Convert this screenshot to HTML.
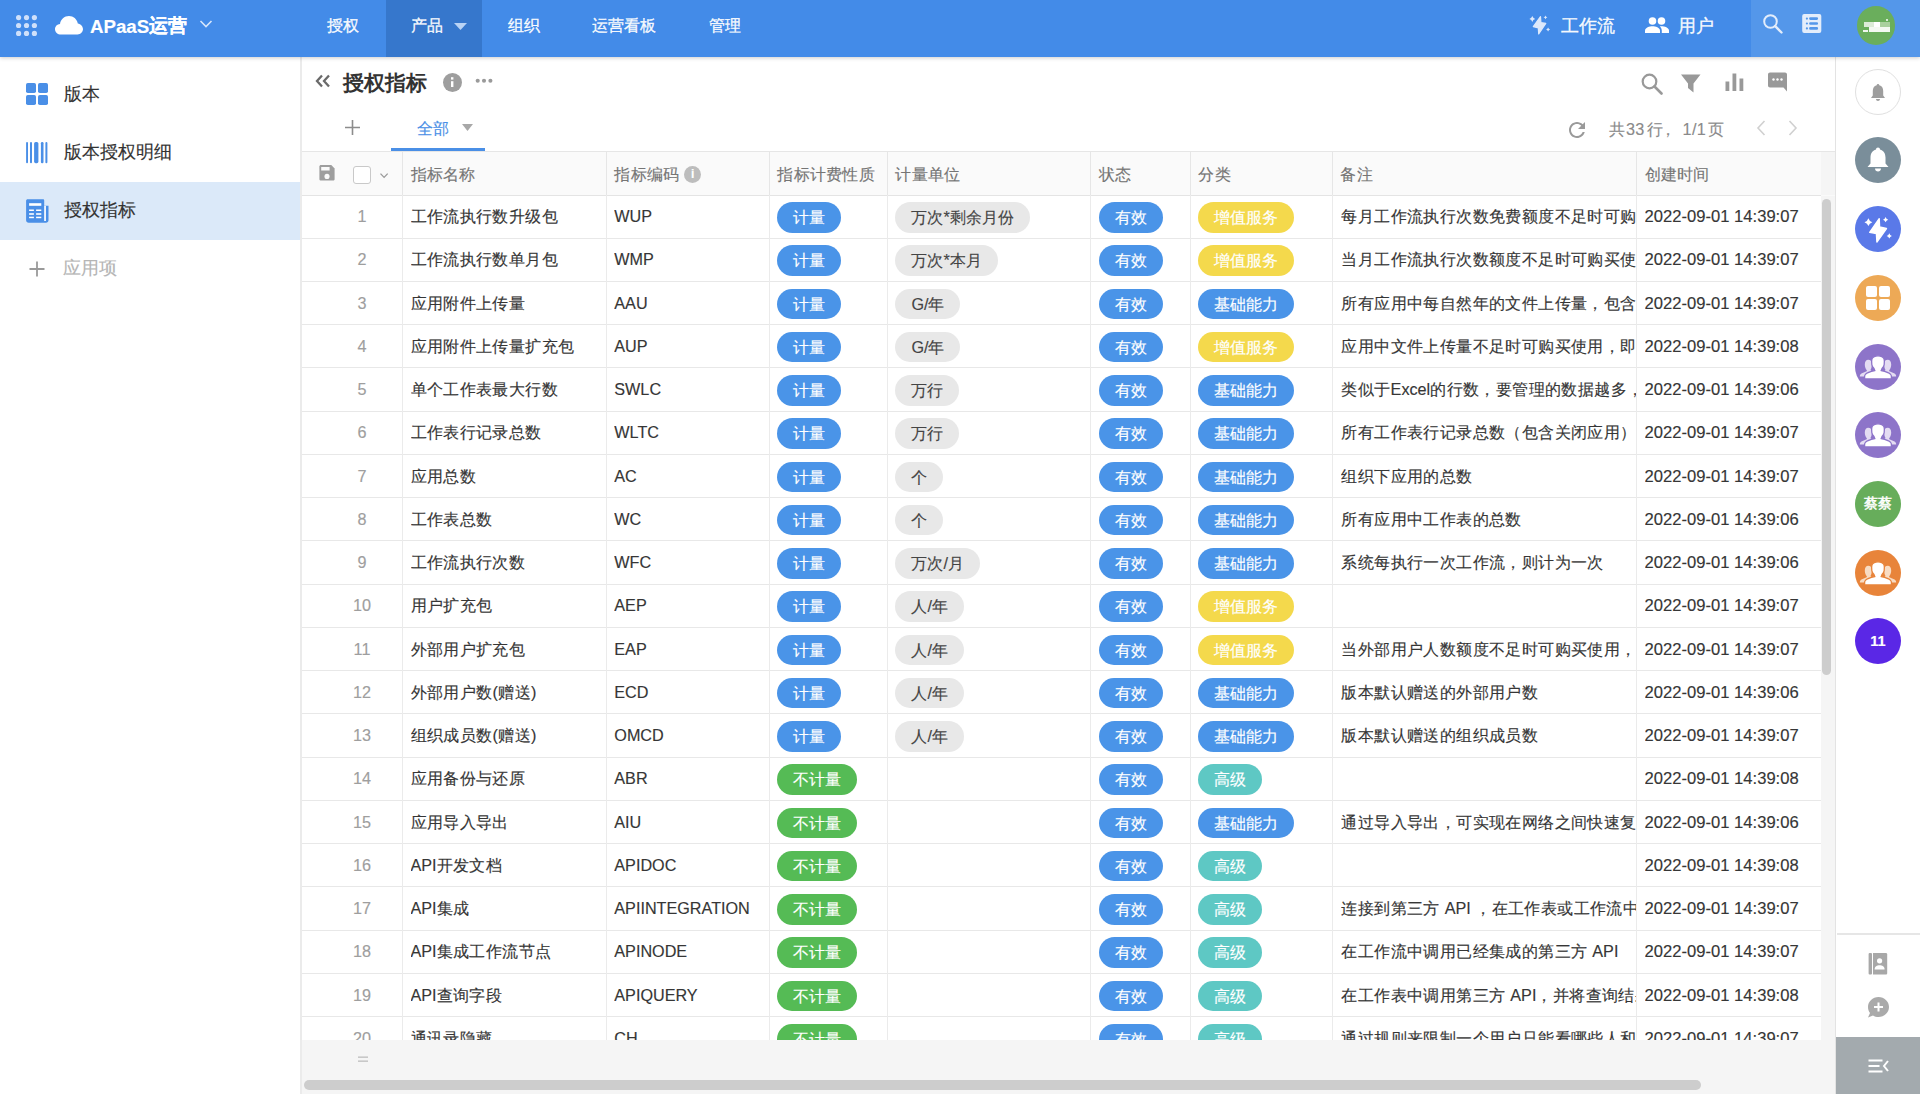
<!DOCTYPE html>
<html><head><meta charset="utf-8">
<style>
*{box-sizing:border-box;margin:0;padding:0}
html,body{width:1920px;height:1094px;overflow:hidden;background:#fff}
body{position:relative;font-family:"Liberation Sans",sans-serif;color:#333;font-size:16.2px;-webkit-text-stroke:0.15px currentColor}
.abs{position:absolute}
svg{position:absolute;display:block}
/* top header */
#top{position:absolute;left:0;top:0;width:1920px;height:57px;background:#438be8;box-shadow:0 1px 4px rgba(0,0,0,.2);z-index:5}
#top .nav{position:absolute;top:0;height:57px;line-height:50px;color:rgba(255,255,255,.95);-webkit-text-stroke:0.35px rgba(255,255,255,.9);font-size:16.2px;white-space:nowrap}
#top .act{position:absolute;left:385.5px;top:0;width:96.5px;height:57px;background:#3677cc}
#top .rt{position:absolute;left:1751px;top:0;width:169px;height:57px;background:#5497ea}
.brand{position:absolute;left:90px;top:0;line-height:52px;height:57px;color:#fff;font-size:18.7px;font-weight:bold;white-space:nowrap}
/* sidebar */
#side{position:absolute;left:0;top:57px;width:302px;height:1037px;border-right:2px solid #ebebeb;background:#fff}
.si{position:absolute;left:64px;font-size:18px;color:#333;white-space:nowrap;line-height:20px}
/* main */
.ttl{position:absolute;left:342.5px;top:70px;font-size:20.8px;font-weight:bold;color:#333;-webkit-text-stroke:0;line-height:26px;white-space:nowrap}
.tab{position:absolute;left:416.5px;top:119px;font-size:16.2px;color:#4a8fe6;line-height:18px}
.uline{position:absolute;left:390.5px;top:148px;width:94.5px;height:3px;background:#4a8fe6}
.pg{position:absolute;left:1609px;top:120.3px;font-size:16.2px;color:#8a8a8a;line-height:18px;white-space:nowrap}
/* table */
#thead{position:absolute;left:302px;top:151px;width:1533.5px;height:44.5px;background:#fafafa;border-top:1.5px solid #e6e6e6}
#thead:after{content:'';position:absolute;left:1519px;top:0;width:15px;height:43px;background:#f5f5f5}
.hb{position:absolute;left:302px;top:194.7px;width:1518.8px;height:1px;background:#e4e4e4}
.hc{position:absolute;top:153px;height:43px;line-height:43px;font-size:16.2px;color:#757575;white-space:nowrap;letter-spacing:.25px}
.hvl{position:absolute;top:152px;height:43px;width:1px;background:#e6e6e6}
.hinfo{display:inline-block;width:17px;height:17px;border-radius:50%;background:#bdbdbd;color:#fff;font-size:12px;line-height:17px;text-align:center;font-weight:bold;margin-left:5px;vertical-align:2px}
#tbody{position:absolute;left:0;top:0;width:1821px;height:1040px;overflow:hidden}
.rn{position:absolute;left:332px;width:60px;height:43.2px;line-height:43px;text-align:center;color:#9e9e9e;font-size:16.2px}
.c{position:absolute;height:43.2px;line-height:43px;white-space:nowrap;overflow:hidden}
.t{font-size:16.2px;color:#363636;letter-spacing:.4px}
.l{font-size:16.2px;letter-spacing:0}
.code{font-size:16.2px;letter-spacing:0}
.dt{font-size:16.6px;letter-spacing:0}
.hl{position:absolute;left:302px;width:1518.8px;height:1px;background:#e8e8e8}
.vl{position:absolute;top:195px;height:845px;width:1px;background:#ebebeb}
.bd{display:inline-block;height:30.6px;line-height:30.6px;border-radius:15.5px;padding:0 16px;font-size:16.2px;color:#fff;vertical-align:middle;position:relative;top:-0.5px}
.blu{background:#4a94e8}
.gry{background:#e8e8e8;color:#444}
.yel{background:#f4d94c}
.grn{background:#55bb55}
.tea{background:#5ec8c4}
#foot{position:absolute;left:302px;top:1040px;width:1533.5px;height:54px;background:#f5f5f5}
/* right rail */
#rail{position:absolute;left:1835px;top:57px;width:85px;height:1037px;border-left:1.5px solid #e3e3e3;background:#fff}
.cir{position:absolute;left:1855px;width:46px;height:46px;border-radius:50%}
</style></head><body>

<div id="top">
  <div class="act"></div>
  <div class="rt"></div>
  <!-- grid dots -->
  <svg style="left:14px;top:13px" width="26" height="26" viewBox="0 0 26 26" fill="#cfe0fa">
    <circle cx="4.6" cy="4.6" r="2.6"/><circle cx="12.5" cy="4.6" r="2.6"/><circle cx="20.4" cy="4.6" r="2.6"/>
    <circle cx="4.6" cy="12.5" r="2.6"/><circle cx="12.5" cy="12.5" r="2.6"/><circle cx="20.4" cy="12.5" r="2.6"/>
    <circle cx="4.6" cy="20.4" r="2.6"/><circle cx="12.5" cy="20.4" r="2.6"/><circle cx="20.4" cy="20.4" r="2.6"/>
  </svg>
  <!-- cloud -->
  <svg style="left:55px;top:16px" width="28" height="19" viewBox="0 0 28 19" fill="#fff">
    <path d="M6 18.5 C2.6 18.5 0 16.2 0 13.2 C0 10.4 2.2 8.2 5 8 C5.6 3.4 9.4 0 14 0 C18.4 0 22 3.2 22.8 7.4 C25.8 7.8 28 10.2 28 13.1 C28 16.1 25.6 18.5 22.5 18.5 Z"/>
  </svg>
  <div class="brand"><span style="position:relative;top:1px">APaaS</span>运营</div>
  <svg style="left:199px;top:19px" width="14" height="10" viewBox="0 0 14 10"><path d="M1.5 2 L7 7.5 L12.5 2" stroke="#d6e6fb" stroke-width="1.6" fill="none"/></svg>
  <div class="nav" style="left:327px">授权</div>
  <div class="nav" style="left:411px">产品</div>
  <svg style="left:454px;top:23px" width="13" height="8" viewBox="0 0 13 8"><path d="M0 0 H13 L6.5 7 Z" fill="#b9d3f5"/></svg>
  <div class="nav" style="left:508px">组织</div>
  <div class="nav" style="left:592px">运营看板</div>
  <div class="nav" style="left:709px">管理</div>
  <!-- sparkle bolt -->
  <svg style="left:1526px;top:12px" width="26" height="26" viewBox="1526 12 26 26" fill="#dde9fb"><path d="M1540.50 16.60 L1533.30 26.60 L1538.30 27.90 L1538.70 34.00 L1545.80 23.40 L1540.90 22.60 Z" stroke="#dde9fb" stroke-width="1.2" stroke-linejoin="round"/><path d="M1532.30 16.10 Q1532.94 18.36 1535.20 19.00 Q1532.94 19.64 1532.30 21.90 Q1531.66 19.64 1529.40 19.00 Q1531.66 18.36 1532.30 16.10 Z"/><path d="M1545.50 15.40 Q1545.92 16.88 1547.40 17.30 Q1545.92 17.72 1545.50 19.20 Q1545.08 17.72 1543.60 17.30 Q1545.08 16.88 1545.50 15.40 Z"/><path d="M1548.10 27.40 Q1548.54 28.96 1550.10 29.40 Q1548.54 29.84 1548.10 31.40 Q1547.66 29.84 1546.10 29.40 Q1547.66 28.96 1548.10 27.40 Z"/></svg>
  <div class="nav" style="left:1561px;font-size:17.5px;line-height:52px">工作流</div>
  <!-- people -->
  <svg style="left:1645px;top:17px" width="24" height="16" viewBox="0 0 24 16" fill="#fff">
    <circle cx="7.5" cy="4" r="3.8"/><circle cx="16.5" cy="4" r="3.8"/>
    <path d="M0 16 V13.5 C0 10.8 4.5 9.3 7.5 9.3 C10.5 9.3 15 10.8 15 13.5 V16 Z"/>
    <path d="M16.5 9.3 C19.5 9.3 24 10.8 24 13.5 V16 H16.8 V13.5 C16.8 11.8 16 10.4 14.8 9.4 C15.4 9.3 16 9.3 16.5 9.3 Z"/>
  </svg>
  <div class="nav" style="left:1677.5px;font-size:17.5px;line-height:52px">用户</div>
  <!-- search -->
  <svg style="left:1762px;top:13px" width="22" height="21" viewBox="0 0 22 21"><circle cx="8.5" cy="8.5" r="6.3" stroke="#e3edfb" stroke-width="2" fill="none"/><path d="M13.2 13.2 L19.5 19.5" stroke="#e3edfb" stroke-width="2.4" stroke-linecap="round"/></svg>
  <!-- table icon -->
  <svg style="left:1795px;top:8px" width="35" height="32" viewBox="1795 8 35 32"><rect x="1802.2" y="14" width="19.1" height="19" rx="2" fill="#e3edfb"/><g fill="#5497ea"><circle cx="1806.9" cy="18.6" r="1.1"/><circle cx="1806.9" cy="23.5" r="1.1"/><circle cx="1806.9" cy="28.4" r="1.1"/></g><g stroke="#5497ea" stroke-width="2.6" stroke-linecap="round"><path d="M1810.4 18.6 H1816.8 M1810.4 23.5 H1816.8 M1810.4 28.4 H1816.8"/></g></svg>
  <div class="abs" style="left:1856.5px;top:6px;width:38.5px;height:38.5px;border-radius:50%;background:#6aae5c;overflow:hidden"><div class="abs" style="left:7.5px;top:15.5px;width:10px;height:5px;background:#dcebd7"></div><div class="abs" style="left:17.5px;top:15.5px;width:5.5px;height:5px;background:#fff"></div><div class="abs" style="left:23px;top:15.5px;width:10px;height:5px;background:#a9d09d"></div><div class="abs" style="left:12.5px;top:20.5px;width:20.5px;height:5.3px;background:#f4f9f2"></div><div class="abs" style="left:6px;top:23.5px;width:5px;height:2.5px;background:#f0f7ee"></div><div class="abs" style="left:29.5px;top:13px;width:2.4px;height:2.4px;border-radius:50%;background:#fff"></div></div>
</div>

<div id="side">
  <svg style="left:26px;top:26px" width="22" height="22" viewBox="0 0 22 22" fill="#4a8fe7">
    <rect x="0" y="0" width="10" height="10" rx="1.8"/><rect x="12" y="0" width="10" height="10" rx="1.8"/>
    <rect x="0" y="12" width="10" height="10" rx="1.8"/><rect x="12" y="12" width="10" height="10" rx="1.8"/>
  </svg>
  <div class="si" style="top:27px">版本</div>
  <svg style="left:20px;top:78px" width="35" height="35" viewBox="20 135 35 35" fill="#4a8fe7"><rect x="26.1" y="142" width="1.9" height="21.2" rx=".95"/><rect x="30" y="142" width="2" height="21.2" rx="1"/><rect x="34.1" y="142" width="4.3" height="21.2" rx="1.6"/><rect x="40.9" y="142" width="2.6" height="21.2" rx="1.2"/><rect x="45.4" y="142" width="2" height="21.2" rx="1"/></svg>
  <div class="si" style="top:85px">版本授权明细</div>
  <div class="abs" style="left:0;top:125px;width:300px;height:58px;background:#dbe9f9"></div>
  <svg style="left:20px;top:138px" width="35" height="32" viewBox="20 195 35 32"><path d="M27.6 199.3 H43 C43.7 199.3 44.2 199.8 44.2 200.5 V205.8 H48.5 V220.2 C48.5 221.6 47.4 222.7 46 222.7 H28.6 C27.2 222.7 26.1 221.6 26.1 220.2 V200.8 C26.1 200 26.8 199.3 27.6 199.3 Z" fill="#4a8fe7"/><g fill="#fff"><rect x="44.2" y="205.8" width="1.7" height="15.2"/><rect x="29.1" y="203.2" width="12.2" height="2.6"/><rect x="29.1" y="209.5" width="4.8" height="1.5"/><rect x="36.1" y="209.5" width="5.2" height="1.5"/><rect x="29.1" y="213.2" width="4.8" height="1.6"/><rect x="36.1" y="213.2" width="5.2" height="1.6"/><rect x="29.1" y="216.7" width="4.8" height="1.5"/><rect x="36.1" y="216.7" width="5.2" height="1.5"/></g></svg>
  <div class="si" style="top:143px">授权指标</div>
  <svg style="left:29px;top:204px" width="16" height="16" viewBox="0 0 16 16"><path d="M8 0.5 V15.5 M0.5 8 H15.5" stroke="#9a9a9a" stroke-width="1.8"/></svg>
  <div class="si" style="top:201px;left:63px;color:#b5b5b5">应用项</div>
</div>

<!-- main header -->
<svg style="left:315px;top:74px" width="16" height="14" viewBox="0 0 16 14"><path d="M7 1.5 L2 7 L7 12.5 M14 1.5 L9 7 L14 12.5" stroke="#6a6a6a" stroke-width="2.3" fill="none"/></svg>
<div class="ttl">授权指标</div>
<div class="abs" style="left:442.5px;top:72.5px;width:19.5px;height:19.5px;border-radius:50%;background:#9e9e9e"></div>
<svg style="left:445px;top:72px" width="15" height="20" viewBox="445 72 15 20" fill="#fff"><rect x="451" y="77.2" width="2.4" height="2.4"/><rect x="451" y="81.2" width="2.4" height="5.8"/></svg>
<svg style="left:472px;top:75px" width="25" height="12" viewBox="472 75 25 12" fill="#9a9a9a"><circle cx="477.7" cy="80.8" r="2.05"/><circle cx="484" cy="80.8" r="2.05"/><circle cx="490.4" cy="80.8" r="2.05"/></svg>
<svg style="left:344px;top:119px" width="17" height="17" viewBox="0 0 17 17"><path d="M8.5 1 V16 M1 8.5 H16" stroke="#8c8c8c" stroke-width="1.6"/></svg>
<div class="tab">全部</div>
<svg style="left:461.5px;top:123.5px" width="11" height="8" viewBox="0 0 11 8"><path d="M0 0 H11 L5.5 7 Z" fill="#a8a8a8"/></svg>
<div class="uline"></div>

<!-- toolbar icons -->
<svg style="left:1641px;top:73px" width="23" height="22" viewBox="0 0 23 22"><circle cx="8.5" cy="8.5" r="6.8" stroke="#999" stroke-width="2.2" fill="none"/><path d="M13.5 13.5 L20.5 20.5" stroke="#999" stroke-width="2.6" stroke-linecap="round"/></svg>
<svg style="left:1681px;top:74px" width="20" height="19" viewBox="0 0 20 19"><path d="M0 0.5 H19.5 L12.5 9.5 V18.5 L7 14 V9.5 Z" fill="#999"/></svg>
<svg style="left:1725px;top:73px" width="19" height="18" viewBox="0 0 19 18" fill="#999"><rect x="0.5" y="8.5" width="3.8" height="9.5"/><rect x="7.5" y="0.5" width="3.8" height="17.5"/><rect x="14.5" y="5.5" width="3.8" height="12.5"/></svg>
<svg style="left:1768px;top:72px" width="20" height="20" viewBox="0 0 20 20"><path d="M2 0.5 H17 C18.1 0.5 19 1.4 19 2.5 V19.5 L15.5 15.5 H2 C0.9 15.5 0 14.6 0 13.5 V2.5 C0 1.4 0.9 0.5 2 0.5 Z" fill="#999"/><g fill="#fff"><circle cx="5.5" cy="7.5" r="1.2"/><circle cx="9.5" cy="7.5" r="1.2"/><circle cx="13.5" cy="7.5" r="1.2"/></g></svg>
<svg style="left:1564.6px;top:118.3px" width="24" height="24" viewBox="0 0 24 24"><path d="M17.65 6.35C16.2 4.9 14.21 4 12 4c-4.42 0-7.99 3.58-7.99 8s3.57 8 7.99 8c3.73 0 6.84-2.550 7.73-6h-2.08c-.82 2.33-3.04 4-5.65 4-3.31 0-6-2.69-6-6s2.69-6 6-6c1.66 0 3.14.69 4.22 1.78L13 11h7V4l-2.35 2.35z" fill="#9a9a9a"/></svg>
<div class="pg" style="left:1609px">共</div><div class="pg" style="left:1626px;letter-spacing:.3px">33</div><div class="pg" style="left:1647px">行</div><div class="pg" style="left:1660px">，</div><div class="pg" style="left:1682.5px;letter-spacing:.4px">1/1</div><div class="pg" style="left:1708px">页</div>
<svg style="left:1756px;top:120px" width="10" height="16" viewBox="0 0 10 16"><path d="M8.5 1 L2 8 L8.5 15" stroke="#d0d0d0" stroke-width="1.6" fill="none"/></svg>
<svg style="left:1788px;top:120px" width="10" height="16" viewBox="0 0 10 16"><path d="M1.5 1 L8 8 L1.5 15" stroke="#d0d0d0" stroke-width="1.6" fill="none"/></svg>

<!-- table header -->
<div id="thead"></div>
<svg style="left:315px;top:160px" width="25" height="25" viewBox="315 160 25 25"><path d="M320.9 165.1 H331.3 L334.6 168.4 V178.9 C334.6 179.8 333.9 180.5 333 180.5 H321 C320.1 180.5 319.4 179.8 319.4 178.9 V166.6 C319.4 165.8 320.1 165.1 320.9 165.1 Z" fill="#9e9e9e"/><rect x="321.2" y="167" width="8.4" height="3.5" fill="#fafafa"/><circle cx="327" cy="176.4" r="2.55" fill="#fafafa"/></svg>
<div class="abs" style="left:353px;top:166px;width:18px;height:18px;border:1.2px solid #c9c9c9;border-radius:3px;background:#fff"></div>
<svg style="left:379px;top:171px" width="10" height="9" viewBox="0 0 10 9"><path d="M1.5 2.6 L5.1 6.4 L8.7 2.6" stroke="#9a9a9a" stroke-width="1.3" fill="none"/></svg>
<div class="hc" style="left:410.5px">指标名称</div><div class="hc" style="left:614.3px">指标编码<span class="hinfo">i</span></div><div class="hc" style="left:777.3px">指标计费性质</div><div class="hc" style="left:895.4px">计量单位</div><div class="hc" style="left:1098.8px">状态</div><div class="hc" style="left:1198.4px">分类</div><div class="hc" style="left:1340.4px">备注</div><div class="hc" style="left:1644.6px">创建时间</div><div class="hvl" style="left:402px"></div><div class="hvl" style="left:605.8px"></div><div class="hvl" style="left:768.8px"></div><div class="hvl" style="left:886.9px"></div><div class="hvl" style="left:1090.3px"></div><div class="hvl" style="left:1189.9px"></div><div class="hvl" style="left:1331.9px"></div><div class="hvl" style="left:1636.1px"></div>
<div class="hb"></div>

<div id="tbody">
<div class="rn" style="top:195.2px">1</div><div class="c t" style="top:195.2px;left:410.5px;width:195.8px">工作流执行数升级包</div><div class="c t code" style="top:195.2px;left:614.3px;width:155px">WUP</div><div class="c" style="top:195.2px;left:777.3px"><span class="bd blu">计量</span></div><div class="c" style="top:195.2px;left:895.4px"><span class="bd gry">万次*剩余月份</span></div><div class="c" style="top:195.2px;left:1098.8px"><span class="bd blu">有效</span></div><div class="c" style="top:195.2px;left:1198.4px"><span class="bd yel">增值服务</span></div><div class="c t note" style="top:195.2px;left:1341.4px;width:295.2px">每月工作流执行次数免费额度不足时可购买使用</div><div class="c t dt" style="top:195.2px;left:1644.6px">2022-09-01 14:39:07</div><div class="hl" style="top:237.75px"></div><div class="rn" style="top:238.44px">2</div><div class="c t" style="top:238.44px;left:410.5px;width:195.8px">工作流执行数单月包</div><div class="c t code" style="top:238.44px;left:614.3px;width:155px">WMP</div><div class="c" style="top:238.44px;left:777.3px"><span class="bd blu">计量</span></div><div class="c" style="top:238.44px;left:895.4px"><span class="bd gry">万次*本月</span></div><div class="c" style="top:238.44px;left:1098.8px"><span class="bd blu">有效</span></div><div class="c" style="top:238.44px;left:1198.4px"><span class="bd yel">增值服务</span></div><div class="c t note" style="top:238.44px;left:1341.4px;width:295.2px">当月工作流执行次数额度不足时可购买使用</div><div class="c t dt" style="top:238.44px;left:1644.6px">2022-09-01 14:39:07</div><div class="hl" style="top:280.99px"></div><div class="rn" style="top:281.69px">3</div><div class="c t" style="top:281.69px;left:410.5px;width:195.8px">应用附件上传量</div><div class="c t code" style="top:281.69px;left:614.3px;width:155px">AAU</div><div class="c" style="top:281.69px;left:777.3px"><span class="bd blu">计量</span></div><div class="c" style="top:281.69px;left:895.4px"><span class="bd gry">G/年</span></div><div class="c" style="top:281.69px;left:1098.8px"><span class="bd blu">有效</span></div><div class="c" style="top:281.69px;left:1198.4px"><span class="bd blu">基础能力</span></div><div class="c t note" style="top:281.69px;left:1341.4px;width:295.2px">所有应用中每自然年的文件上传量，包含</div><div class="c t dt" style="top:281.69px;left:1644.6px">2022-09-01 14:39:07</div><div class="hl" style="top:324.24px"></div><div class="rn" style="top:324.93px">4</div><div class="c t" style="top:324.93px;left:410.5px;width:195.8px">应用附件上传量扩充包</div><div class="c t code" style="top:324.93px;left:614.3px;width:155px">AUP</div><div class="c" style="top:324.93px;left:777.3px"><span class="bd blu">计量</span></div><div class="c" style="top:324.93px;left:895.4px"><span class="bd gry">G/年</span></div><div class="c" style="top:324.93px;left:1098.8px"><span class="bd blu">有效</span></div><div class="c" style="top:324.93px;left:1198.4px"><span class="bd yel">增值服务</span></div><div class="c t note" style="top:324.93px;left:1341.4px;width:295.2px">应用中文件上传量不足时可购买使用，即</div><div class="c t dt" style="top:324.93px;left:1644.6px">2022-09-01 14:39:08</div><div class="hl" style="top:367.48px"></div><div class="rn" style="top:368.18px">5</div><div class="c t" style="top:368.18px;left:410.5px;width:195.8px">单个工作表最大行数</div><div class="c t code" style="top:368.18px;left:614.3px;width:155px">SWLC</div><div class="c" style="top:368.18px;left:777.3px"><span class="bd blu">计量</span></div><div class="c" style="top:368.18px;left:895.4px"><span class="bd gry">万行</span></div><div class="c" style="top:368.18px;left:1098.8px"><span class="bd blu">有效</span></div><div class="c" style="top:368.18px;left:1198.4px"><span class="bd blu">基础能力</span></div><div class="c t note" style="top:368.18px;left:1341.4px;width:295.2px">类似于<span class="l">Excel</span>的行数，要管理的数据越多，</div><div class="c t dt" style="top:368.18px;left:1644.6px">2022-09-01 14:39:06</div><div class="hl" style="top:410.72px"></div><div class="rn" style="top:411.42px">6</div><div class="c t" style="top:411.42px;left:410.5px;width:195.8px">工作表行记录总数</div><div class="c t code" style="top:411.42px;left:614.3px;width:155px">WLTC</div><div class="c" style="top:411.42px;left:777.3px"><span class="bd blu">计量</span></div><div class="c" style="top:411.42px;left:895.4px"><span class="bd gry">万行</span></div><div class="c" style="top:411.42px;left:1098.8px"><span class="bd blu">有效</span></div><div class="c" style="top:411.42px;left:1198.4px"><span class="bd blu">基础能力</span></div><div class="c t note" style="top:411.42px;left:1341.4px;width:295.2px">所有工作表行记录总数（包含关闭应用）</div><div class="c t dt" style="top:411.42px;left:1644.6px">2022-09-01 14:39:07</div><div class="hl" style="top:453.97px"></div><div class="rn" style="top:454.67px">7</div><div class="c t" style="top:454.67px;left:410.5px;width:195.8px">应用总数</div><div class="c t code" style="top:454.67px;left:614.3px;width:155px">AC</div><div class="c" style="top:454.67px;left:777.3px"><span class="bd blu">计量</span></div><div class="c" style="top:454.67px;left:895.4px"><span class="bd gry">个</span></div><div class="c" style="top:454.67px;left:1098.8px"><span class="bd blu">有效</span></div><div class="c" style="top:454.67px;left:1198.4px"><span class="bd blu">基础能力</span></div><div class="c t note" style="top:454.67px;left:1341.4px;width:295.2px">组织下应用的总数</div><div class="c t dt" style="top:454.67px;left:1644.6px">2022-09-01 14:39:07</div><div class="hl" style="top:497.21px"></div><div class="rn" style="top:497.91px">8</div><div class="c t" style="top:497.91px;left:410.5px;width:195.8px">工作表总数</div><div class="c t code" style="top:497.91px;left:614.3px;width:155px">WC</div><div class="c" style="top:497.91px;left:777.3px"><span class="bd blu">计量</span></div><div class="c" style="top:497.91px;left:895.4px"><span class="bd gry">个</span></div><div class="c" style="top:497.91px;left:1098.8px"><span class="bd blu">有效</span></div><div class="c" style="top:497.91px;left:1198.4px"><span class="bd blu">基础能力</span></div><div class="c t note" style="top:497.91px;left:1341.4px;width:295.2px">所有应用中工作表的总数</div><div class="c t dt" style="top:497.91px;left:1644.6px">2022-09-01 14:39:06</div><div class="hl" style="top:540.46px"></div><div class="rn" style="top:541.16px">9</div><div class="c t" style="top:541.16px;left:410.5px;width:195.8px">工作流执行次数</div><div class="c t code" style="top:541.16px;left:614.3px;width:155px">WFC</div><div class="c" style="top:541.16px;left:777.3px"><span class="bd blu">计量</span></div><div class="c" style="top:541.16px;left:895.4px"><span class="bd gry">万次/月</span></div><div class="c" style="top:541.16px;left:1098.8px"><span class="bd blu">有效</span></div><div class="c" style="top:541.16px;left:1198.4px"><span class="bd blu">基础能力</span></div><div class="c t note" style="top:541.16px;left:1341.4px;width:295.2px">系统每执行一次工作流，则计为一次</div><div class="c t dt" style="top:541.16px;left:1644.6px">2022-09-01 14:39:06</div><div class="hl" style="top:583.7px"></div><div class="rn" style="top:584.4px">10</div><div class="c t" style="top:584.4px;left:410.5px;width:195.8px">用户扩充包</div><div class="c t code" style="top:584.4px;left:614.3px;width:155px">AEP</div><div class="c" style="top:584.4px;left:777.3px"><span class="bd blu">计量</span></div><div class="c" style="top:584.4px;left:895.4px"><span class="bd gry">人/年</span></div><div class="c" style="top:584.4px;left:1098.8px"><span class="bd blu">有效</span></div><div class="c" style="top:584.4px;left:1198.4px"><span class="bd yel">增值服务</span></div><div class="c t dt" style="top:584.4px;left:1644.6px">2022-09-01 14:39:07</div><div class="hl" style="top:626.95px"></div><div class="rn" style="top:627.65px">11</div><div class="c t" style="top:627.65px;left:410.5px;width:195.8px">外部用户扩充包</div><div class="c t code" style="top:627.65px;left:614.3px;width:155px">EAP</div><div class="c" style="top:627.65px;left:777.3px"><span class="bd blu">计量</span></div><div class="c" style="top:627.65px;left:895.4px"><span class="bd gry">人/年</span></div><div class="c" style="top:627.65px;left:1098.8px"><span class="bd blu">有效</span></div><div class="c" style="top:627.65px;left:1198.4px"><span class="bd yel">增值服务</span></div><div class="c t note" style="top:627.65px;left:1341.4px;width:295.2px">当外部用户人数额度不足时可购买使用，</div><div class="c t dt" style="top:627.65px;left:1644.6px">2022-09-01 14:39:07</div><div class="hl" style="top:670.19px"></div><div class="rn" style="top:670.89px">12</div><div class="c t" style="top:670.89px;left:410.5px;width:195.8px">外部用户数(赠送)</div><div class="c t code" style="top:670.89px;left:614.3px;width:155px">ECD</div><div class="c" style="top:670.89px;left:777.3px"><span class="bd blu">计量</span></div><div class="c" style="top:670.89px;left:895.4px"><span class="bd gry">人/年</span></div><div class="c" style="top:670.89px;left:1098.8px"><span class="bd blu">有效</span></div><div class="c" style="top:670.89px;left:1198.4px"><span class="bd blu">基础能力</span></div><div class="c t note" style="top:670.89px;left:1341.4px;width:295.2px">版本默认赠送的外部用户数</div><div class="c t dt" style="top:670.89px;left:1644.6px">2022-09-01 14:39:06</div><div class="hl" style="top:713.44px"></div><div class="rn" style="top:714.14px">13</div><div class="c t" style="top:714.14px;left:410.5px;width:195.8px">组织成员数(赠送)</div><div class="c t code" style="top:714.14px;left:614.3px;width:155px">OMCD</div><div class="c" style="top:714.14px;left:777.3px"><span class="bd blu">计量</span></div><div class="c" style="top:714.14px;left:895.4px"><span class="bd gry">人/年</span></div><div class="c" style="top:714.14px;left:1098.8px"><span class="bd blu">有效</span></div><div class="c" style="top:714.14px;left:1198.4px"><span class="bd blu">基础能力</span></div><div class="c t note" style="top:714.14px;left:1341.4px;width:295.2px">版本默认赠送的组织成员数</div><div class="c t dt" style="top:714.14px;left:1644.6px">2022-09-01 14:39:07</div><div class="hl" style="top:756.68px"></div><div class="rn" style="top:757.38px">14</div><div class="c t" style="top:757.38px;left:410.5px;width:195.8px">应用备份与还原</div><div class="c t code" style="top:757.38px;left:614.3px;width:155px">ABR</div><div class="c" style="top:757.38px;left:777.3px"><span class="bd grn">不计量</span></div><div class="c" style="top:757.38px;left:1098.8px"><span class="bd blu">有效</span></div><div class="c" style="top:757.38px;left:1198.4px"><span class="bd tea">高级</span></div><div class="c t dt" style="top:757.38px;left:1644.6px">2022-09-01 14:39:08</div><div class="hl" style="top:799.93px"></div><div class="rn" style="top:800.63px">15</div><div class="c t" style="top:800.63px;left:410.5px;width:195.8px">应用导入导出</div><div class="c t code" style="top:800.63px;left:614.3px;width:155px">AIU</div><div class="c" style="top:800.63px;left:777.3px"><span class="bd grn">不计量</span></div><div class="c" style="top:800.63px;left:1098.8px"><span class="bd blu">有效</span></div><div class="c" style="top:800.63px;left:1198.4px"><span class="bd blu">基础能力</span></div><div class="c t note" style="top:800.63px;left:1341.4px;width:295.2px">通过导入导出，可实现在网络之间快速复制</div><div class="c t dt" style="top:800.63px;left:1644.6px">2022-09-01 14:39:06</div><div class="hl" style="top:843.17px"></div><div class="rn" style="top:843.88px">16</div><div class="c t" style="top:843.88px;left:410.5px;width:195.8px"><span class="l">API</span>开发文档</div><div class="c t code" style="top:843.88px;left:614.3px;width:155px">APIDOC</div><div class="c" style="top:843.88px;left:777.3px"><span class="bd grn">不计量</span></div><div class="c" style="top:843.88px;left:1098.8px"><span class="bd blu">有效</span></div><div class="c" style="top:843.88px;left:1198.4px"><span class="bd tea">高级</span></div><div class="c t dt" style="top:843.88px;left:1644.6px">2022-09-01 14:39:08</div><div class="hl" style="top:886.42px"></div><div class="rn" style="top:887.12px">17</div><div class="c t" style="top:887.12px;left:410.5px;width:195.8px"><span class="l">API</span>集成</div><div class="c t code" style="top:887.12px;left:614.3px;width:155px">APIINTEGRATION</div><div class="c" style="top:887.12px;left:777.3px"><span class="bd grn">不计量</span></div><div class="c" style="top:887.12px;left:1098.8px"><span class="bd blu">有效</span></div><div class="c" style="top:887.12px;left:1198.4px"><span class="bd tea">高级</span></div><div class="c t note" style="top:887.12px;left:1341.4px;width:295.2px">连接到第三方 <span class="l">API </span>，在工作表或工作流中</div><div class="c t dt" style="top:887.12px;left:1644.6px">2022-09-01 14:39:07</div><div class="hl" style="top:929.66px"></div><div class="rn" style="top:930.37px">18</div><div class="c t" style="top:930.37px;left:410.5px;width:195.8px"><span class="l">API</span>集成工作流节点</div><div class="c t code" style="top:930.37px;left:614.3px;width:155px">APINODE</div><div class="c" style="top:930.37px;left:777.3px"><span class="bd grn">不计量</span></div><div class="c" style="top:930.37px;left:1098.8px"><span class="bd blu">有效</span></div><div class="c" style="top:930.37px;left:1198.4px"><span class="bd tea">高级</span></div><div class="c t note" style="top:930.37px;left:1341.4px;width:295.2px">在工作流中调用已经集成的第三方 <span class="l">API</span></div><div class="c t dt" style="top:930.37px;left:1644.6px">2022-09-01 14:39:07</div><div class="hl" style="top:972.91px"></div><div class="rn" style="top:973.61px">19</div><div class="c t" style="top:973.61px;left:410.5px;width:195.8px"><span class="l">API</span>查询字段</div><div class="c t code" style="top:973.61px;left:614.3px;width:155px">APIQUERY</div><div class="c" style="top:973.61px;left:777.3px"><span class="bd grn">不计量</span></div><div class="c" style="top:973.61px;left:1098.8px"><span class="bd blu">有效</span></div><div class="c" style="top:973.61px;left:1198.4px"><span class="bd tea">高级</span></div><div class="c t note" style="top:973.61px;left:1341.4px;width:295.2px">在工作表中调用第三方 <span class="l">API</span>，并将查询结果</div><div class="c t dt" style="top:973.61px;left:1644.6px">2022-09-01 14:39:08</div><div class="hl" style="top:1016.15px"></div><div class="rn" style="top:1016.86px">20</div><div class="c t" style="top:1016.86px;left:410.5px;width:195.8px">通讯录隐藏</div><div class="c t code" style="top:1016.86px;left:614.3px;width:155px">CH</div><div class="c" style="top:1016.86px;left:777.3px"><span class="bd grn">不计量</span></div><div class="c" style="top:1016.86px;left:1098.8px"><span class="bd blu">有效</span></div><div class="c" style="top:1016.86px;left:1198.4px"><span class="bd tea">高级</span></div><div class="c t note" style="top:1016.86px;left:1341.4px;width:295.2px">通过规则来限制一个用户只能看哪些人和</div><div class="c t dt" style="top:1016.86px;left:1644.6px">2022-09-01 14:39:07</div><div class="hl" style="top:1059.4px"></div><div class="vl" style="left:402px"></div><div class="vl" style="left:605.8px"></div><div class="vl" style="left:768.8px"></div><div class="vl" style="left:886.9px"></div><div class="vl" style="left:1090.3px"></div><div class="vl" style="left:1189.9px"></div><div class="vl" style="left:1331.9px"></div><div class="vl" style="left:1636.1px"></div>
</div>

<!-- v scrollbar -->
<div class="abs" style="left:1821px;top:196px;width:14px;height:844px;background:#f5f5f5"></div>
<div class="abs" style="left:1822px;top:198.5px;width:9px;height:476px;border-radius:4.5px;background:#cdcdcd"></div>

<div id="foot">
  <svg style="left:56px;top:16px" width="10" height="7" viewBox="0 0 10 7" fill="#bdbdbd"><rect x="0" y="0.5" width="10" height="1.3"/><rect x="0" y="4.5" width="10" height="1.3"/></svg>
  <div class="abs" style="left:2px;top:40px;width:1397px;height:10px;border-radius:5px;background:#cdcdcd"></div>
</div>

<div id="rail">
  <div class="cir" style="left:19px;top:11.5px;border:1.5px solid #e0e0e0"></div>
  <svg style="left:32px;top:26px" width="20" height="20" viewBox="0 0 20 20" fill="#9e9e9e"><path d="M10 1 C10.8 1 11.3 1.6 11.3 2.3 C14 3 15.2 5.2 15.2 8 V12.5 L17 15 H3 L4.8 12.5 V8 C4.8 5.2 6 3 8.7 2.3 C8.7 1.6 9.2 1 10 1 Z"/><path d="M8 16 H12 C12 17.2 11.1 18 10 18 C8.9 18 8 17.2 8 16 Z"/></svg>
</div>
<div class="cir" style="top:137.42px;background:#7a8e9a"></div>
<svg style="left:1864px;top:147.42px" width="28" height="26" viewBox="0 0 28 26" fill="#fff"><path d="M14 0.5 C15.2 0.5 16 1.4 16 2.5 C19.8 3.5 21.5 6.8 21.5 10.5 V16.5 L24.5 20 H3.5 L6.5 16.5 V10.5 C6.5 6.8 8.2 3.5 12 2.5 C12 1.4 12.8 0.5 14 0.5 Z"/><path d="M11 21.5 H17 C17 23.2 15.6 24.5 14 24.5 C12.4 24.5 11 23.2 11 21.5 Z"/></svg>
<div class="cir" style="top:206.14px;background:#5a79e8"></div>
<svg style="left:1855px;top:206.14px" width="46" height="46" viewBox="1855 205 46 46" fill="#fff"><path d="M1879.20 217.60 L1869.70 231.30 L1876.40 232.60 L1876.90 241.00 L1886.50 227.50 L1879.60 226.00 Z" stroke="#fff" stroke-width="1.4" stroke-linejoin="round"/><path d="M1868.40 217.30 Q1869.26 220.34 1872.30 221.20 Q1869.26 222.06 1868.40 225.10 Q1867.54 222.06 1864.50 221.20 Q1867.54 220.34 1868.40 217.30 Z"/><path d="M1885.60 216.10 Q1886.17 218.13 1888.20 218.70 Q1886.17 219.27 1885.60 221.30 Q1885.03 219.27 1883.00 218.70 Q1885.03 218.13 1885.60 216.10 Z"/><path d="M1889.30 232.30 Q1889.87 234.33 1891.90 234.90 Q1889.87 235.47 1889.30 237.50 Q1888.73 235.47 1886.70 234.90 Q1888.73 234.33 1889.30 232.30 Z"/></svg>
<div class="cir" style="top:274.86px;background:#eda956"></div>
<svg style="left:1865px;top:284.86px" width="26" height="26" viewBox="0 0 26 26" fill="#fff"><rect x="1" y="1" width="11" height="11" rx="2"/><rect x="14" y="1" width="11" height="11" rx="2"/><rect x="1" y="14" width="11" height="11" rx="2"/><rect x="14" y="14" width="11" height="11" rx="2"/></svg>
<div class="cir" style="top:343.58px;background:#8d74c9"></div>
<div class="cir" style="top:412.30px;background:#8d74c9"></div>
<div class="cir" style="top:481.02px;background:#67ad5b"></div>
<div class="abs" style="left:1855px;top:481.02px;width:46px;height:46px;line-height:46px;text-align:center;color:#fff;font-size:13.5px;-webkit-text-stroke:.45px #fff">蔡蔡</div>
<div class="cir" style="top:549.74px;background:#e8843a"></div>
<div class="cir" style="top:618.46px;background:#5a27e6"></div>
<div class="abs" style="left:1855px;top:618.46px;width:46px;height:46px;line-height:46px;text-align:center;color:#fff;font-size:14.6px;font-weight:bold">11</div>
<!-- group icons -->
<svg style="left:1855px;top:343.58px" width="46" height="46" viewBox="0 0 46 46"><g fill="#e4dcf2"><path d="M13.2 15.8 C15.4 15.8 16.9 17.2 16.9 19.6 C16.9 22 16.5 24.3 15.6 25.8 L15.9 26.7 C17.5 27.1 19 27.5 20 27.9 L14 32.4 H4.8 C4.8 31 5.6 30 7 29.3 C8.5 28.5 10.3 27.8 11.6 27.3 L11.9 26.2 C10.6 25 9.8 23 9.8 20.5 C9.8 17.5 11.2 15.8 13.2 15.8 Z"/><path d="M32.8 15.8 C30.6 15.8 29.1 17.2 29.1 19.6 C29.1 22 29.5 24.3 30.4 25.8 L30.1 26.7 C28.5 27.1 27 27.5 26 27.9 L32 32.4 H41.2 C41.2 31 40.4 30 39 29.3 C37.5 28.5 35.7 27.8 34.4 27.3 L34.1 26.2 C35.4 25 36.2 23 36.2 20.5 C36.2 17.5 34.8 15.8 32.8 15.8 Z"/></g><path d="M23 11.8 C26 11.8 28.2 13 29 14.8 C29.6 16.5 29.4 19 29.2 20.5 C29 22.2 28 23.5 27 24.5 L26.2 26.6 C30 27.4 34 28.5 35.6 30.4 C36.2 31 36.4 31.8 36.4 32.6 V34.9 H9.6 V32.6 C9.6 31.8 9.8 31 10.4 30.4 C12 28.5 16 27.4 19.8 26.6 L19 24.5 C18 23.5 17 22.2 16.8 20.5 C16.6 19 16.4 16.5 17 14.8 C17.8 13 20 11.8 23 11.8 Z" fill="#fff" stroke="#8d74c9" stroke-width="1.3"/></svg>
<svg style="left:1855px;top:412.30px" width="46" height="46" viewBox="0 0 46 46"><g fill="#e4dcf2"><path d="M13.2 15.8 C15.4 15.8 16.9 17.2 16.9 19.6 C16.9 22 16.5 24.3 15.6 25.8 L15.9 26.7 C17.5 27.1 19 27.5 20 27.9 L14 32.4 H4.8 C4.8 31 5.6 30 7 29.3 C8.5 28.5 10.3 27.8 11.6 27.3 L11.9 26.2 C10.6 25 9.8 23 9.8 20.5 C9.8 17.5 11.2 15.8 13.2 15.8 Z"/><path d="M32.8 15.8 C30.6 15.8 29.1 17.2 29.1 19.6 C29.1 22 29.5 24.3 30.4 25.8 L30.1 26.7 C28.5 27.1 27 27.5 26 27.9 L32 32.4 H41.2 C41.2 31 40.4 30 39 29.3 C37.5 28.5 35.7 27.8 34.4 27.3 L34.1 26.2 C35.4 25 36.2 23 36.2 20.5 C36.2 17.5 34.8 15.8 32.8 15.8 Z"/></g><path d="M23 11.8 C26 11.8 28.2 13 29 14.8 C29.6 16.5 29.4 19 29.2 20.5 C29 22.2 28 23.5 27 24.5 L26.2 26.6 C30 27.4 34 28.5 35.6 30.4 C36.2 31 36.4 31.8 36.4 32.6 V34.9 H9.6 V32.6 C9.6 31.8 9.8 31 10.4 30.4 C12 28.5 16 27.4 19.8 26.6 L19 24.5 C18 23.5 17 22.2 16.8 20.5 C16.6 19 16.4 16.5 17 14.8 C17.8 13 20 11.8 23 11.8 Z" fill="#fff" stroke="#8d74c9" stroke-width="1.3"/></svg>
<svg style="left:1855px;top:549.74px" width="46" height="46" viewBox="0 0 46 46"><g fill="#f8dcc3"><path d="M13.2 15.8 C15.4 15.8 16.9 17.2 16.9 19.6 C16.9 22 16.5 24.3 15.6 25.8 L15.9 26.7 C17.5 27.1 19 27.5 20 27.9 L14 32.4 H4.8 C4.8 31 5.6 30 7 29.3 C8.5 28.5 10.3 27.8 11.6 27.3 L11.9 26.2 C10.6 25 9.8 23 9.8 20.5 C9.8 17.5 11.2 15.8 13.2 15.8 Z"/><path d="M32.8 15.8 C30.6 15.8 29.1 17.2 29.1 19.6 C29.1 22 29.5 24.3 30.4 25.8 L30.1 26.7 C28.5 27.1 27 27.5 26 27.9 L32 32.4 H41.2 C41.2 31 40.4 30 39 29.3 C37.5 28.5 35.7 27.8 34.4 27.3 L34.1 26.2 C35.4 25 36.2 23 36.2 20.5 C36.2 17.5 34.8 15.8 32.8 15.8 Z"/></g><path d="M23 11.8 C26 11.8 28.2 13 29 14.8 C29.6 16.5 29.4 19 29.2 20.5 C29 22.2 28 23.5 27 24.5 L26.2 26.6 C30 27.4 34 28.5 35.6 30.4 C36.2 31 36.4 31.8 36.4 32.6 V34.9 H9.6 V32.6 C9.6 31.8 9.8 31 10.4 30.4 C12 28.5 16 27.4 19.8 26.6 L19 24.5 C18 23.5 17 22.2 16.8 20.5 C16.6 19 16.4 16.5 17 14.8 C17.8 13 20 11.8 23 11.8 Z" fill="#fff" stroke="#e8843a" stroke-width="1.3"/></svg>
<div class="abs" style="left:1836.5px;top:933px;width:83.5px;height:1.5px;background:#e6e6e6"></div>
<svg style="left:1860px;top:945px" width="36" height="36" viewBox="1860 945 36 36" fill="#a8a8a8"><rect x="1868.6" y="953" width="3.4" height="21.6" rx="1"/><path d="M1873 953 H1885.9 C1886.6 953 1887.2 953.6 1887.2 954.3 V973.3 C1887.2 974 1886.6 974.6 1885.9 974.6 H1873 Z"/><g fill="#fff"><circle cx="1879.6" cy="960.8" r="2.6"/><path d="M1874.6 969.6 C1874.6 966.6 1877 965.3 1879.6 965.3 C1882.2 965.3 1884.6 966.6 1884.6 969.6 Z"/></g></svg>
<svg style="left:1867px;top:996px" width="23" height="23" viewBox="0 0 23 23"><path d="M11.5 1 C17.3 1 22 5.5 22 11 C22 16.5 17.3 21 11.5 21 C9.5 21 7.6 20.5 6 19.5 L1 21.5 L3 17 C1.7 15.3 1 13.2 1 11 C1 5.5 5.7 1 11.5 1 Z" fill="#aaa"/><path d="M11.5 6.5 V15.5 M7 11 H16" stroke="#fff" stroke-width="2"/></svg>
<div class="abs" style="left:1836px;top:1037px;width:84px;height:57px;background:#a3aaae"></div>
<svg style="left:1868px;top:1057.5px" width="22" height="17" viewBox="0 0 22 17" fill="#fff"><rect x="0.5" y="1.5" width="14" height="2"/><rect x="0.5" y="7" width="11" height="2"/><rect x="0.5" y="12.5" width="14" height="2"/><path d="M20 3 L16 8 L20 13" stroke="#fff" stroke-width="2" fill="none"/></svg>

</body></html>
